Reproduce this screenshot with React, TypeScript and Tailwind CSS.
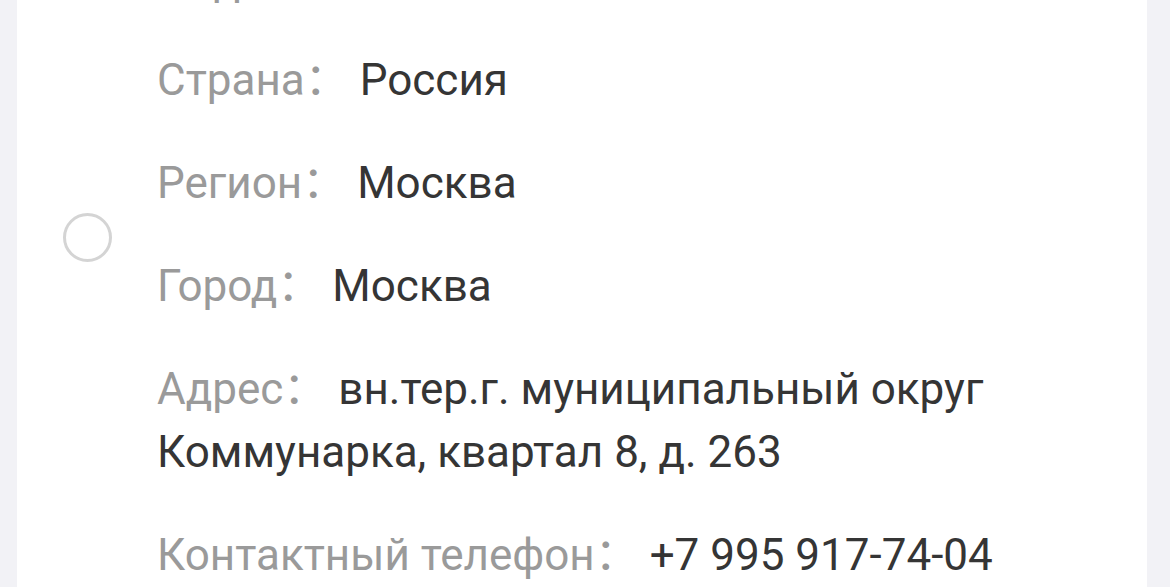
const rows: { label: string; value: string }[] = [
  { label: "Индекс", value: "108801" },
  { label: "Страна", value: "Россия" },
  { label: "Регион", value: "Москва" },
  { label: "Город", value: "Москва" },
  { label: "Адрес", value: "вн.тер.г. муниципальный округ Коммунарка, квартал 8, д. 263" },
  { label: "Контактный телефон", value: "+7 995 917-74-04" },
];

export default function App() {
  return (
    <div
      className="h-[587px] overflow-hidden bg-[#f2f2f6] pl-[17px] pr-[23px]"
      style={{ fontFamily: 'Roboto, "Noto Sans CJK SC", sans-serif' }}
    >
      <div className="flex h-full items-start bg-white pl-[46px]">
        {/* selection radio */}
        <div className="mt-[213px] h-[49px] w-[49px] shrink-0 rounded-full border-[3px] border-[#d4d4d4]" />

        <div className="-mt-[50px] ml-[45px] flex w-[900px] flex-col gap-[40px]">
          {rows.map((row, i) => (
            <p
              key={row.label}
              className={`text-[44px] leading-[63px] ${i === 0 ? "-mb-[4px]" : ""}`}
            >
              <span className="text-[#9a9a9a]">{row.label}：</span>
              <span className="ml-[11px] text-[#353535]">{row.value}</span>
            </p>
          ))}
        </div>
      </div>
    </div>
  );
}
